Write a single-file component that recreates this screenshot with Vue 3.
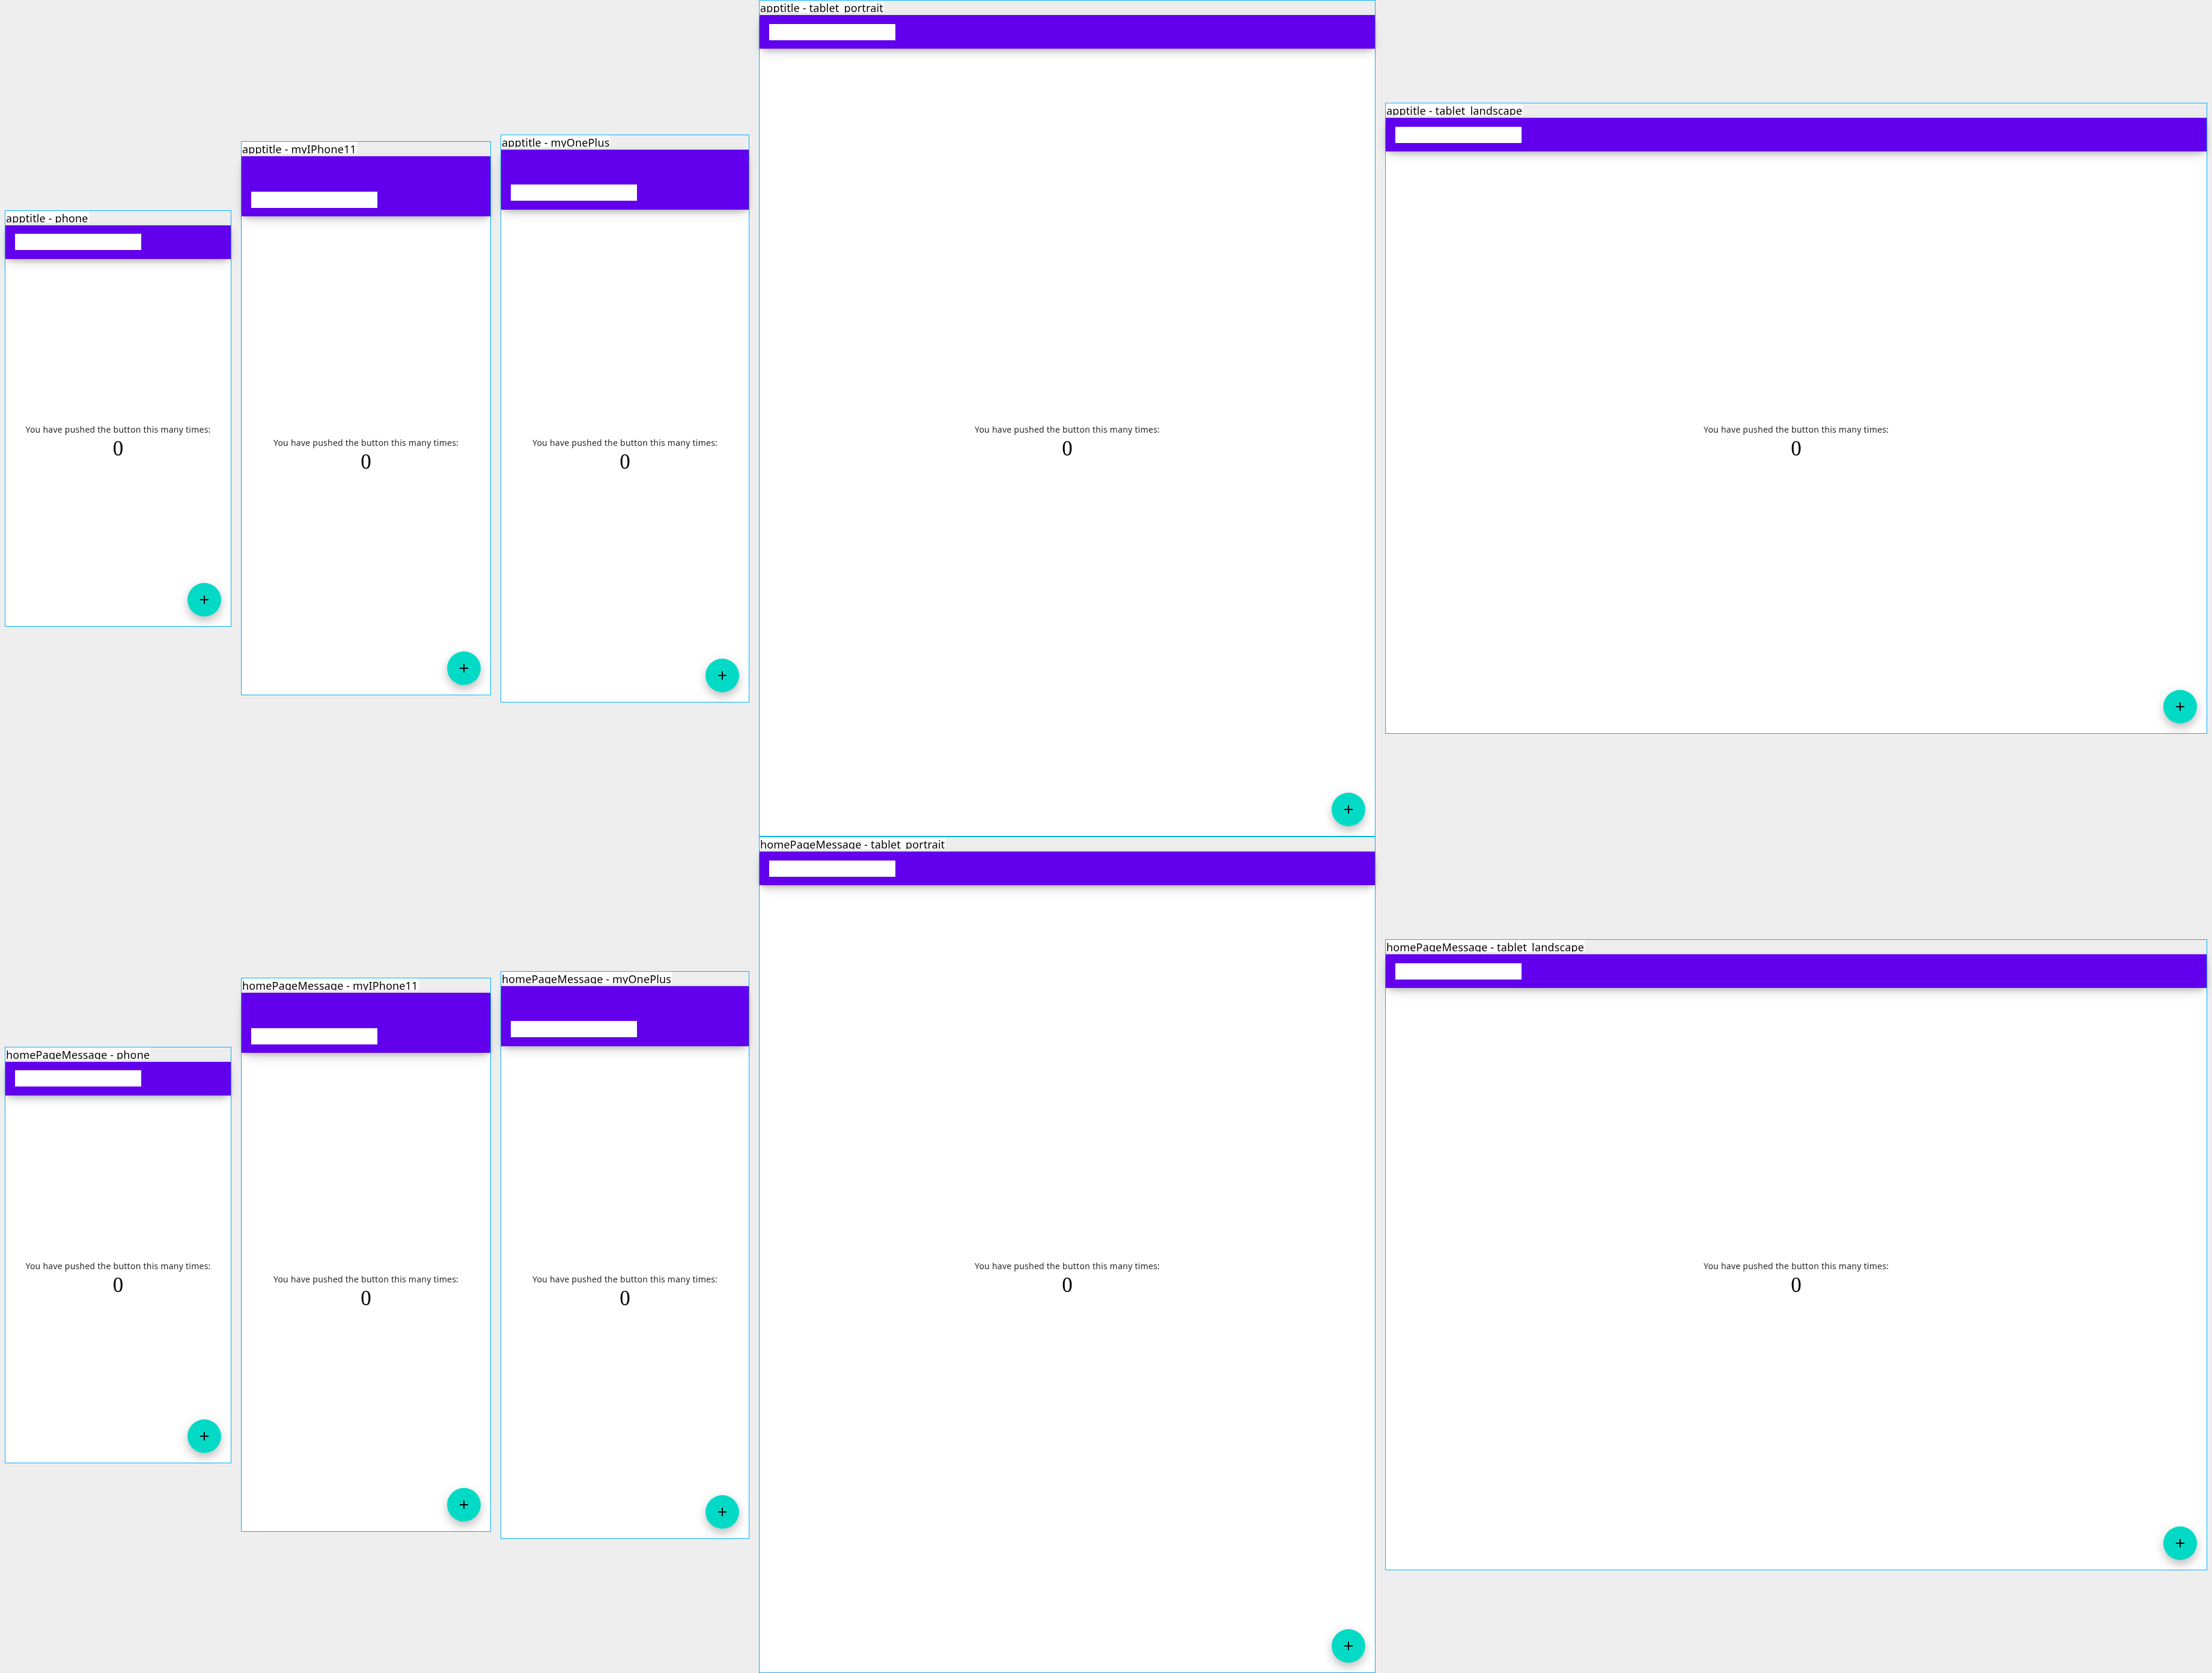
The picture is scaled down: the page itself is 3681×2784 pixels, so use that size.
<script setup>
const devices = [
  { name: 'phone', w: 375, h: 667, status: 0 },
  { name: 'myIPhone11', w: 414, h: 896, status: 44 },
  { name: 'myOnePlus', w: 412, h: 919, status: 44 },
  { name: 'tablet_portrait', w: 1024, h: 1366, status: 0 },
  { name: 'tablet_landscape', w: 1366, h: 1024, status: 0 },
]
const scenarios = ['apptitle', 'homePageMessage']
</script>

<template>
  <div class="canvas">
    <section v-for="scenario in scenarios" :key="scenario" class="row">
      <article v-for="d in devices" :key="d.name" class="frame">
        <div class="label-strip">
          <div class="label"><span class="label-text">{{ scenario }} - {{ d.name }}</span></div>
        </div>
        <div class="screen" :style="{ width: d.w + 'px', height: d.h + 'px' }">
          <header class="appbar" :style="{ paddingTop: d.status + 'px' }">
            <div class="toolbar"><div class="title"></div></div>
          </header>
          <main class="content">
            <p class="message">You have pushed the button this many times:</p>
            <p class="count">0</p>
          </main>
          <button class="fab" type="button" aria-label="Increment">
            <svg viewBox="0 0 24 24" width="24" height="24" aria-hidden="true">
              <path d="M19 13h-6v6h-2v-6H5v-2h6V5h2v6h6v2z" fill="#000" />
            </svg>
          </button>
        </div>
      </article>
    </section>
  </div>
</template>

<style>
html, body {
  margin: 0;
  background: #eeeeee;
}
</style>

<style scoped>
.canvas {
  width: 3681px;
  height: 2784px;
  display: flex;
  flex-direction: column;
  background: #eeeeee;
  overflow: hidden;
}
.row {
  height: 1392px;
  display: flex;
  align-items: center;
  gap: 16px;
  padding: 0 8px;
  box-sizing: border-box;
}
.frame {
  flex: none;
  border: 1px solid #00b0ff;
  display: flex;
  flex-direction: column;
}
.label-strip {
  height: 24px;
  box-sizing: border-box;
  padding-bottom: 4px;
  display: flex;
}
.label {
  height: 20px;
  overflow: hidden;
  padding: 0 1px;
  background: #ffffff;
  color: #000000;
  font-family: "Noto Sans", sans-serif;
  font-size: 18px;
  letter-spacing: 0.15px;
  line-height: 24px;
  white-space: nowrap;
}
.label-text {
  display: block;
  will-change: opacity;
}
.screen {
  position: relative;
  display: flex;
  flex-direction: column;
  background: #ffffff;
}
.appbar {
  position: relative;
  z-index: 1;
  flex: none;
  background: #6200ee;
  box-shadow: 0 5px 10px -3px rgba(0, 0, 0, 0.2), 0 10px 20px -5px rgba(0, 0, 0, 0.16), 0 0 12px 0 rgba(0, 0, 0, 0.06);
}
.toolbar {
  height: 56px;
  padding: 0 16px;
  box-sizing: border-box;
  display: flex;
  align-items: center;
}
.title {
  width: 210px;
  height: 27px;
  background: #ffffff;
}
.content {
  flex: 1;
  display: flex;
  flex-direction: column;
  align-items: center;
  justify-content: center;
}
.message {
  margin: 0 0 2px;
  font-family: "Noto Sans", sans-serif;
  font-size: 14px;
  letter-spacing: 0.25px;
  line-height: 19px;
  color: rgba(0, 0, 0, 0.87);
  will-change: opacity;
}
.count {
  margin: 0;
  font-family: "Liberation Serif", serif;
  font-size: 35px;
  line-height: 42px;
  color: #000000;
  will-change: opacity;
}
.fab {
  position: absolute;
  right: 16px;
  bottom: 16px;
  z-index: 2;
  width: 56px;
  height: 56px;
  padding: 0;
  border: 0;
  border-radius: 50%;
  background: #03dac6;
  display: flex;
  align-items: center;
  justify-content: center;
  box-shadow: 0 8px 16px -2px rgba(0, 0, 0, 0.22), 0 4px 22px 0 rgba(0, 0, 0, 0.1);
}
</style>
